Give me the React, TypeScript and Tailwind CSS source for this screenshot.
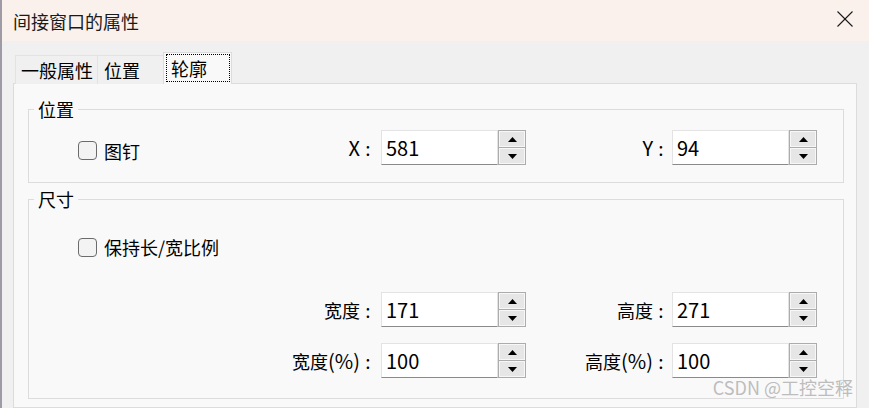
import React from "react";

function Arrow({ up }: { up: boolean }) {
  return (
    <svg width="9" height="5" viewBox="0 0 9 5">
      {up ? <polygon points="4.5,0 9,5 0,5" fill="#000" /> : <polygon points="0,0 9,0 4.5,5" fill="#000" />}
    </svg>
  );
}

function Spin({ value }: { value: string }) {
  return (
    <div className="flex h-[35px]">
      <div className="w-[117px] bg-white border border-[#e3e3e3] border-b-[#8a8a8a] pl-[4px] flex items-center text-[20px] leading-[24px] text-black">
        {value}
      </div>
      <div className="w-[28px] border border-[#acacac] bg-[#acacac] flex flex-col gap-px">
        <div className="flex-1 bg-[#e6e6e6] border border-[#f7f7f7] flex items-center justify-center">
          <Arrow up />
        </div>
        <div className="flex-1 bg-[#e6e6e6] border border-[#f7f7f7] flex items-center justify-center">
          <Arrow up={false} />
        </div>
      </div>
    </div>
  );
}

function Check({ label }: { label: string }) {
  return (
    <div className="flex items-center gap-[7px]">
      <div className="w-[19px] h-[19px] rounded-[4px] border border-[#6b6b6b] bg-[#f3f3f3]" />
      <span className="text-[18px] leading-[22px] text-black">{label}</span>
    </div>
  );
}

function Label({ cn, latin, w }: { cn: string; latin: string; w: "a" | "b" }) {
  return (
    <div
      className={
        "flex justify-end items-center text-[18px] leading-[22px] text-black " +
        (w === "a" ? "w-[86px]" : "w-[143px]")
      }
    >
      {cn ? <span>{cn}</span> : null}
      {latin ? <span className="text-[20px] leading-[22px]">{latin}</span> : null}
      <span className="w-[16px] text-center text-[19px]">:</span>
    </div>
  );
}

function Row({ l1, v1, l2, v2, pct }: { l1: string; v1: string; l2: string; v2: string; pct?: boolean }) {
  return (
    <div className="flex items-center h-[35px]">
      <div className="w-[261px]" />
      <Label cn={l1} latin={pct ? "(%)" : ""} w="a" />
      <div className="ml-[5px]">
        <Spin value={v1} />
      </div>
      <Label cn={l2} latin={pct ? "(%)" : ""} w="b" />
      <div className="ml-[3px]">
        <Spin value={v2} />
      </div>
    </div>
  );
}

export default function App() {
  return (
    <div className="w-[869px] h-[408px] relative overflow-hidden bg-[#f0f0f0] flex flex-col border-l-2 border-[#9e9ba6] font-['Noto_Sans_CJK_SC','Microsoft_YaHei',sans-serif] text-black">
      {/* title bar */}
      <div className="h-[41px] shrink-0 bg-[#faf1ec] flex items-center justify-between pl-[11px] pr-[16px]">
        <span className="text-[18px] leading-[22px] text-[#1a1a1a]">间接窗口的属性</span>
        <svg width="16" height="16" viewBox="0 0 16 16" className="mb-[3px]">
          <line x1="0.5" y1="0.5" x2="15.5" y2="15.5" stroke="#1a1a1a" strokeWidth="1.1" />
          <line x1="15.5" y1="0.5" x2="0.5" y2="15.5" stroke="#1a1a1a" strokeWidth="1.1" />
        </svg>
      </div>

      {/* body */}
      <div className="flex-1 flex flex-col pl-[11px] pr-[12px] pt-[12px]">
        {/* tabs */}
        <div className="flex items-end h-[31px] pl-[2px] relative z-10 -mb-px">
          <div className="w-[83px] h-[29px] border border-[#e3e3e3] border-b-0 bg-[#f0f0f0] flex items-center pl-[5px] text-[18px] leading-[22px]">
            一般属性
          </div>
          <div className="w-[65px] h-[29px] border-t border-[#e3e3e3] bg-[#f0f0f0] flex items-center pl-[6px] text-[18px] leading-[22px]">
            位置
          </div>
          <div className="w-[69px] h-[32px] border border-[#dcdcdc] border-b-0 bg-[#f9f9f9] flex pt-[1px] pl-[2px] pr-[1px] pb-[2px]">
            <div className="flex-1 border border-dotted border-black flex items-center pl-[4px] text-[18px] leading-[22px]">
              轮廓
            </div>
          </div>
        </div>

        {/* panel */}
        <div className="flex-1 bg-[#f9f9f9] border border-[#dcdcdc] pl-[14px] pr-[12px] pt-[25px]">
          {/* group 1 */}
          <div className="relative border border-[#dcdcdc] h-[74px] pt-[20px]">
            <span className="absolute left-[5px] -top-[12px] px-[4px] bg-[#f9f9f9] text-[18px] leading-[22px]">位置</span>
            <div className="flex items-center h-[35px]">
              <div className="w-[261px] pl-[49px] mt-[6px]">
                <Check label="图钉" />
              </div>
              <Label cn="" latin="X" w="a" />
              <div className="ml-[5px]">
                <Spin value="581" />
              </div>
              <Label cn="" latin="Y" w="b" />
              <div className="ml-[3px]">
                <Spin value="94" />
              </div>
            </div>
          </div>

          {/* group 2 */}
          <div className="relative border border-[#dcdcdc] h-[200px] mt-[16px]">
            <span className="absolute left-[5px] -top-[12px] px-[4px] bg-[#f9f9f9] text-[18px] leading-[22px]">尺寸</span>
            <div className="flex items-center h-[20px] pl-[49px] mt-[37px]">
              <Check label="保持长/宽比例" />
            </div>
            <div className="mt-[35px]">
              <Row l1="宽度" v1="171" l2="高度" v2="271" />
            </div>
            <div className="mt-[16px]">
              <Row l1="宽度" v1="100" l2="高度" v2="100" pct />
            </div>
          </div>
        </div>
      </div>

      <span className="absolute right-[16px] bottom-[11px] text-[18px] leading-[20px] text-[#bdbdbd]">CSDN @工控空释</span>
    </div>
  );
}
